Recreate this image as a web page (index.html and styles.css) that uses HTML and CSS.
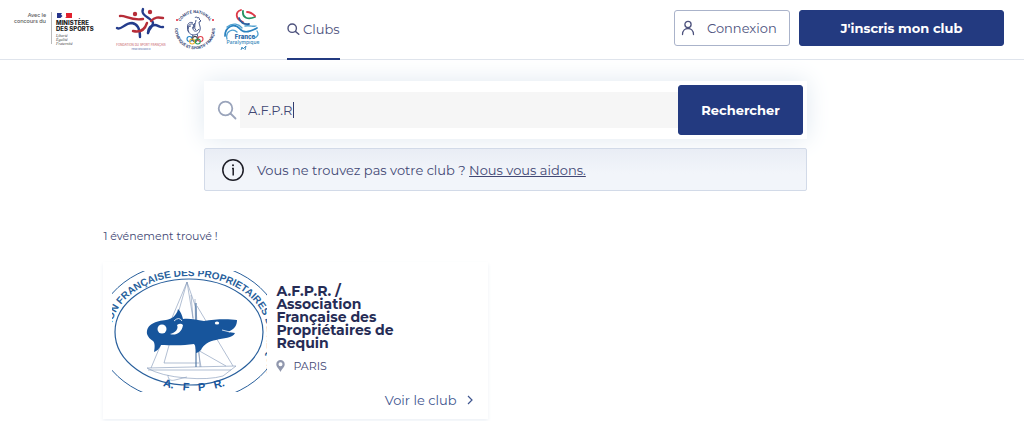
FILE: index.html
```html
<!DOCTYPE html>
<html lang="fr">
<head>
  <meta charset="UTF-8">
  <meta name="viewport" content="width=device-width, initial-scale=1">
  <title>Trouver un club</title>
  <link rel="stylesheet" href="styles.css">
</head>
<body>
  <header class="header">
    <div class="logos">
      <!-- Ministère des Sports -->
      <svg width="84" height="40" viewBox="0 0 84 40" role="img" aria-label="Ministère des Sports">
        <g class="ministere-concours">
          <text x="35" y="7" text-anchor="end">Avec le</text>
          <text x="35" y="13" text-anchor="end">concours du</text>
        </g>
        <path d="M40.500 2V34" stroke="#aaa" stroke-width=".8"/>
        <path d="M46 3h6v5h-6z" fill="#26348b"/>
        <path d="M50 4.500l1.500 1.500-2 2h2.500v-5h-1z" fill="#fff"/>
        <path d="M55 3h6v5h-7q2-1 1-2.500z" fill="#e1202d"/>
        <g class="ministere-nom">
          <text x="45" y="15">MINISTÈRE</text>
          <text x="45" y="21">DES SPORTS</text>
        </g>
        <g class="ministere-devise">
          <text x="45" y="27">Liberté</text>
          <text x="45" y="31">Égalité</text>
          <text x="45" y="35">Fraternité</text>
        </g>
      </svg>
      <!-- Fondation du Sport Français -->
      <svg width="52" height="46" viewBox="0 0 52 46" role="img" aria-label="Fondation du Sport Français">
        <g fill="none" stroke-width="2.400" stroke-linecap="round" stroke-linejoin="round">
          <path d="M5 9c5-1 11 5 23 3" stroke="#b62d38"/>
          <path d="M2 21c4 3 7-5 15-5 7 1 8 8 8 14" stroke="#243c8c"/>
          <path d="M28 2c-3 7 9 9 10 14 0 4-4 5-5 10" stroke="#243c8c"/>
          <path d="M18 24c8 2 12-2 14-8M36 14c4-4 7-4 12-3" stroke="#b62d38"/>
          <path d="M33 26c0-5 3-8 7-8 3 0 5 3 8 2" stroke="#243c8c"/>
        </g>
        <circle cx="20" cy="7" r="2.200" fill="#b62d38"/>
        <circle cx="35" cy="5" r="2.200" fill="#b62d38"/>
        <text class="fondation-nom" x="26" y="39" text-anchor="middle">FONDATION DU SPORT FRANÇAIS</text>
        <text class="fondation-sous" x="26" y="43" text-anchor="middle">HENRI SÉRANDOUR</text>
      </svg>
      <!-- Comité National Olympique et Sportif Français -->
      <svg width="44" height="44" viewBox="0 0 44 44" role="img" aria-label="Comité National Olympique et Sportif Français">
        <defs>
          <path id="arc-haut" d="M5 22A17 17 0 0 1 39 22"/>
          <path id="arc-bas" d="M3 15A20 20 0 1 0 41 15"/>
        </defs>
        <text class="cnosf"><textPath href="#arc-haut" startOffset="50%" text-anchor="middle">COMITÉ NATIONAL</textPath></text>
        <text class="cnosf"><textPath href="#arc-bas" startOffset="50%" text-anchor="middle">OLYMPIQUE ET SPORTIF FRANÇAIS</textPath></text>
        <circle cx="4" cy="12" r="1" fill="#e3243b"/>
        <circle cx="40" cy="12" r="1" fill="#e3243b"/>
        <g fill="none" stroke="#34477f" stroke-width=".9" stroke-linejoin="round">
          <path d="M22 10c1-2 2-1 2 0 2-1 3 0 2 1l2 2-2 1c0 3 2 5 1 8-1 4-4 5-7 5-4-1-6-4-5-8 1-3 4-4 6-2 1 2 0 3-2 3"/>
          <path d="M23 12c0 4-3 4-3 8s4 4 6 1M22 15c0 4-1 6 1 7M18 18c-3 0-4 4-2 6M15 21c-2-5 2-8 5-6M20 27l-1 2M24 26l1 3"/>
        </g>
        <g fill="none" stroke-width="1.100">
          <circle cx="16.500" cy="31" r="2.500" stroke="#2485c6"/>
          <circle cx="22" cy="31" r="2.500" stroke="#333"/>
          <circle cx="27.500" cy="31" r="2.500" stroke="#e1424d"/>
          <circle cx="19.200" cy="33.500" r="2.500" stroke="#eab22f"/>
          <circle cx="24.800" cy="33.500" r="2.500" stroke="#2b9a59"/>
        </g>
      </svg>
      <!-- France Paralympique -->
      <svg width="40" height="44" viewBox="0 0 40 44" role="img" aria-label="France Paralympique">
        <g fill="none" stroke-linecap="round">
          <path d="M18 2c-6 2-6 9 2 12" stroke="#dd3948" stroke-width="1.800"/>
          <path d="M16 10c1 4 5 7 10 6" stroke="#2b5e9f" stroke-width="1.800"/>
          <path d="M20 3c-1 7 5 9 12 6" stroke="#259261" stroke-width="1.800"/>
          <path d="M24 4c3 0 6 2 8 4" stroke="#dd3948" stroke-width="1.800"/>
          <path d="M2 28c0-9 9-14 15-7 4 5 10 3 17-1" stroke="#2b82bf" stroke-width="1.700"/>
          <path d="M4 19c6-5 12-3 15 1M4 31c-2-8 6-11 10-7M22 18c5-1 8 1 11 0M31 30c4-1 5-4 3-7" stroke="#50a0d0" stroke-width="1.300"/>
        </g>
        <text class="para-nom" x="22" y="31" text-anchor="middle">France</text>
        <text class="para-sous" x="20" y="36" text-anchor="middle">Paralympique</text>
        <path d="M18 42l1-3 1 2 3-3-1 4" fill="none" stroke="#3584b9" stroke-width=".9"/>
      </svg>
    </div>

    <nav class="nav">
      <a class="nav-link" href="#">
        <svg width="13" height="13" viewBox="0 0 13 13" fill="none" stroke="currentColor" stroke-width="1.400" stroke-linecap="round" aria-hidden="true">
          <circle cx="5.200" cy="5.200" r="4.200"/>
          <path d="M8.400 8.400L11.800 11.300"/>
        </svg>
        Clubs
      </a>
    </nav>

    <div class="actions">
      <button class="btn btn-outline" type="button">
        <svg width="14" height="16" viewBox="0 0 14 16" fill="none" stroke="currentColor" stroke-width="1.300" stroke-linecap="round" aria-hidden="true">
          <circle cx="7" cy="4.500" r="3.100"/>
          <path d="M1.500 14.500C1.500 6.500 12.500 6.500 12.500 14.500"/>
        </svg>
        <span>Connexion</span>
      </button>
      <button class="btn btn-primary btn-inscription" type="button">J'inscris mon club</button>
    </div>
  </header>

  <main class="main">
    <div class="search-zone">
      <form class="search">
        <label class="search-icon" for="recherche" aria-label="Rechercher un club">
          <svg width="20" height="20" viewBox="0 0 20 20" fill="none" stroke="currentColor" stroke-width="1.800" stroke-linecap="round" aria-hidden="true">
            <circle cx="8.500" cy="8.500" r="6.800"/>
            <path d="M13.500 13.500L18.500 18.500"/>
          </svg>
        </label>
        <div class="search-field">
          <input type="text" id="recherche" value="A.F.P.R" autocomplete="off">
          <span class="caret"></span>
        </div>
        <button class="btn btn-primary btn-search" type="submit">Rechercher</button>
      </form>

      <div class="help">
        <svg width="24" height="24" viewBox="0 0 24 24" fill="none" stroke="#1d1d26" stroke-width="1.500" aria-hidden="true">
          <circle cx="12" cy="12" r="10.200"/>
          <path d="M11 10.500H12.200V17.500"/>
          <circle cx="12" cy="7.300" r="1" fill="#1d1d26" stroke="none"/>
        </svg>
        <p>Vous ne trouvez pas votre club ? <a href="#">Nous vous aidons.</a></p>
      </div>
    </div>

    <p class="count">1 événement trouvé !</p>

    <div class="results">
      <article class="card">
        <!-- Logo du club -->
        <svg class="card-logo" width="155" height="121" viewBox="0 0 155 121" role="img" aria-label="Logo A.F.P.R.">
          <defs>
            <path id="arc-nom" d="M-1 160V61A78 56 0 0 1 155 61V160"/>
            <path id="arc-sigle" d="M34 108Q82 132 130 108"/>
          </defs>
          <g fill="none" stroke="#285f9c">
            <ellipse cx="77" cy="61" rx="74" ry="53" stroke-width="1.200"/>
            <ellipse cx="77" cy="61" rx="92" ry="70"/>
          </g>
          <text class="club-nom"><textPath href="#arc-nom" startOffset="50%" text-anchor="middle">ASSOCIATION FRANÇAISE DES PROPRIETAIRES DE REQUIN</textPath></text>
          <g fill="none" stroke="#7d93b5" stroke-width=".6">
            <path d="M75 11L39 97M75 11L52 92M75 11L84 37L88 96M75 11L89 96M79 24L81 47M83 28L84 78L114 95M85 35L121 95M52 92H87"/>
            <path d="M35 97L124 95L111 105Q97 109 74 107Q49 105 35 97z"/>
            <path d="M36 99L119 99M56 104c0 5 3 6 7 5l12-3"/>
          </g>
          <path d="M84 32V96" stroke="#466f9f" stroke-width="1.100"/>
          <path fill="#17559c" d="M35 63C34 53 44 50 54 49C60 48 65 44 66 38C69 41 70 44 71 48C78 47 84 49 92 50C103 48 117 48 125 49C125 54 123 58 116 61L123 62C121 67 111 67 104 69C97 70 91 74 89 79C87 81 85 82 84 82C84 78 84 75 82 73C70 75 58 74 49 74C47 78 45 80 42 81C43 76 43 72 41 70C38 68 36 66 35 63z"/>
          <circle cx="50" cy="58" r="4.500" fill="#fff"/>
          <path d="M58 63C63 65 70 62 71 54C69 52 67 53 65 54C67 58 63 62 58 63z" fill="#fff"/>
          <ellipse cx="105" cy="52" rx="2.200" ry="1.600" fill="#fff"/>
          <path d="M110 59L118 61M62 50Q67 45 70 50" stroke="#fff" stroke-width=".8" fill="none"/>
          <text class="club-sigle"><textPath href="#arc-sigle" startOffset="50%" text-anchor="middle">A.&#160;&#160; F&#160;&#160; P&#160;&#160; R.</textPath></text>
        </svg>
        <div class="card-body">
          <h2>A.F.P.R. / Association Française des Propriétaires de Requin</h2>
          <p class="place">
            <svg width="9" height="12" viewBox="0 0 9 12" aria-hidden="true">
              <path fill="#9097ad" fill-rule="evenodd" d="M4.500 0A4.200 4.200 0 0 0 .3 4.200C.3 7 3 8.500 4.500 12C6 8.500 8.700 7 8.700 4.200A4.200 4.200 0 0 0 4.500 0zM4.500 2.200a2 2 0 1 1 0 4 2 2 0 0 1 0-4z"/>
            </svg>
            PARIS
          </p>
          <a class="card-link" href="#">
            Voir le club
            <svg width="6" height="10" viewBox="0 0 6 10" fill="none" stroke="currentColor" stroke-width="1.200" aria-hidden="true">
              <path d="M1 1L5 5L1 9"/>
            </svg>
          </a>
        </div>
      </article>
    </div>
  </main>
</body>
</html>
```

FILE: styles.css
```css
* {
  box-sizing: border-box;
}
body {
  margin: 0;
  font-family: Montserrat, Inter, sans-serif;
  font-size: 13px;
  line-height: 20px;
  color: #424874;
  background: #fff;
}
h2, p {
  margin: 0;
}

/* En-tête */
.header {
  display: flex;
  align-items: center;
  height: 60px;
  padding: 0 20px 0 11px;
  border-bottom: 1px solid #dfe4ec;
}
.logos {
  display: flex;
  align-items: center;
  gap: 6px;
  height: 56px;
}
.logos svg:first-child {
  margin-right: 14px;
}
.ministere-concours {
  font: 600 5px Montserrat, Inter, sans-serif;
  fill: #666;
}
.ministere-nom {
  font: 800 6px Inter, sans-serif;
  fill: #222;
}
.ministere-devise {
  font: italic 4px "Liberation Serif", serif;
  fill: #444;
}
.fondation-nom {
  font: 3px Inter, sans-serif;
  fill: #c4545c;
}
.fondation-sous {
  font: 2px Inter, sans-serif;
  fill: #4b62a5;
}
.cnosf {
  font: 700 4px Roboto, sans-serif;
  fill: #2d3e72;
}
.para-nom {
  font: 800 6px Inter, sans-serif;
  fill: #1c65a6;
}
.para-sous {
  font: 500 5px Inter, sans-serif;
  fill: #3584b9;
}
.nav {
  align-self: stretch;
  margin-left: 24px;
}
.nav-link {
  display: flex;
  align-items: center;
  gap: 3px;
  height: 60px;
  border-bottom: 2px solid #233a80;
  color: #4d527d;
  text-decoration: none;
}
.actions {
  display: flex;
  gap: 9px;
  margin: 0 0 4px auto;
}

/* Boutons */
.btn {
  height: 36px;
  border: 1px solid #aab3ca;
  border-radius: 3px;
  font: inherit;
  cursor: pointer;
}
.btn-outline {
  display: flex;
  align-items: center;
  gap: 12px;
  width: 116px;
  padding: 0 6px;
  background: #fff;
  color: #4d527d;
}
.btn-primary {
  border-color: #233a80;
  background: #233a80;
  color: #fff;
  font-weight: 700;
}
.btn-inscription {
  width: 205px;
}

/* Recherche */
.main {
  width: 80%;
  max-width: 1200px;
  margin: 0 auto;
  padding: 21px 14px 3px 1px;
}
.search-zone {
  width: 75%;
  margin: 0 auto;
}
.search {
  display: flex;
  align-items: center;
  height: 58px;
  padding: 0 4px 0 13px;
  background: #fff;
  box-shadow: 0 0 24px #dfe8f0;
}
.search-icon {
  display: flex;
  margin-right: 3px;
  color: #9aa4bb;
}
.search-field {
  position: relative;
  flex: 1;
}
.search-field input {
  display: block;
  width: 100%;
  height: 36px;
  padding: 0 8px;
  border: 0;
  background: #f6f6f6;
  color: #424874;
  font: inherit;
}
.caret {
  position: absolute;
  top: 10px;
  left: 53px;
  width: 1px;
  height: 16px;
  background: #333c6e;
}
.btn-search {
  width: 125px;
  height: 50px;
}
.help {
  display: flex;
  align-items: center;
  gap: 12px;
  height: 43px;
  margin-top: 9px;
  padding: 0 16px;
  border: 1px solid #d2dae8;
  border-radius: 2px;
  background: linear-gradient(#e9edf5, #f2f5fa 60%);
}
.help a {
  color: inherit;
}

/* Résultats */
.count {
  margin-top: 35px;
  font-size: 11px;
}
.results {
  display: grid;
  grid-template-columns: repeat(2, 1fr);
  gap: 36px;
  margin-top: 16px;
}
.card {
  display: flex;
  gap: 9px;
  padding: 9px;
  box-shadow: 0 2px 4px #edf1f6;
}
.card-logo {
  flex: none;
  margin-bottom: 18px;
}
.club-nom {
  font: 700 10px "Liberation Sans", sans-serif;
  fill: #285f9c;
}
.club-sigle {
  font: 700 11px "Liberation Sans", sans-serif;
  fill: #17559c;
}
.card-body {
  display: flex;
  flex: 1;
  flex-direction: column;
}
.card h2 {
  max-width: 130px;
  margin-top: 14px;
  color: #262c55;
  font-size: 14px;
  line-height: 13px;
}
.place {
  display: flex;
  align-items: center;
  gap: 8px;
  margin-top: 6px;
  font-size: 11px;
}
.card-link {
  display: flex;
  align-items: center;
  align-self: flex-end;
  gap: 10px;
  margin-top: auto;
  margin-right: 6px;
  color: #3f568f;
  text-decoration: none;
}
```
